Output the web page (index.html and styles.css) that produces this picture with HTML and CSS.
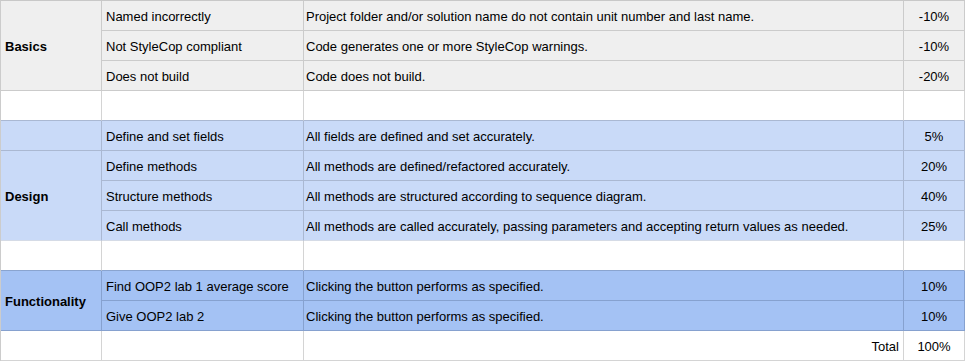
FILE: index.html
```html
<!DOCTYPE html>
<html>
<head>
<meta charset="utf-8">
<link rel="stylesheet" href="styles.css">
</head>
<body>
<div class="rubric">
  <div class="c cat gray b-gray span3">Basics</div>
  <div class="c gray b-gray">Named incorrectly</div>
  <div class="c desc gray b-gray">Project folder and/or solution name do not contain unit number and last name.</div>
  <div class="c pct gray b-gray">-10%</div>
  <div class="c gray b-gray">Not StyleCop compliant</div>
  <div class="c desc gray b-gray">Code generates one or more StyleCop warnings.</div>
  <div class="c pct gray b-gray">-10%</div>
  <div class="c gray b-gray">Does not build</div>
  <div class="c desc gray b-gray">Code does not build.</div>
  <div class="c pct gray b-gray">-20%</div>

  <div class="c blank to-design"></div>
  <div class="c blank to-design"></div>
  <div class="c blank to-design"></div>
  <div class="c blank to-design"></div>

  <div class="c design b-design"></div>
  <div class="c design b-design">Define and set fields</div>
  <div class="c desc design b-design">All fields are defined and set accurately.</div>
  <div class="c pct design b-design">5%</div>
  <div class="c cat design b-design span3 last-design">Design</div>
  <div class="c design b-design">Define methods</div>
  <div class="c desc design b-design">All methods are defined/refactored accurately.</div>
  <div class="c pct design b-design">20%</div>
  <div class="c design b-design">Structure methods</div>
  <div class="c desc design b-design">All methods are structured according to sequence diagram.</div>
  <div class="c pct design b-design">40%</div>
  <div class="c design b-design last-design">Call methods</div>
  <div class="c desc design b-design last-design">All methods are called accurately, passing parameters and accepting return values as needed.</div>
  <div class="c pct design b-design last-design">25%</div>

  <div class="c blank to-func"></div>
  <div class="c blank to-func"></div>
  <div class="c blank to-func"></div>
  <div class="c blank to-func"></div>

  <div class="c cat func b-func span2">Functionality</div>
  <div class="c func b-func">Find OOP2 lab 1 average score</div>
  <div class="c desc func b-func">Clicking the button performs as specified.</div>
  <div class="c pct func b-func">10%</div>
  <div class="c func b-func">Give OOP2 lab 2</div>
  <div class="c desc func b-func">Clicking the button performs as specified.</div>
  <div class="c pct func b-func">10%</div>

  <div class="c blank"></div>
  <div class="c blank"></div>
  <div class="c blank total">Total</div>
  <div class="c pct blank">100%</div>
</div>
</body>
</html>
```
FILE: styles.css
```css
html, body {
  margin: 0;
  padding: 0;
  background: #ffffff;
}

.rubric {
  display: grid;
  grid-template-columns: 101px 202px 600px 61px;
  grid-auto-rows: 30px;
  border-top: 1px solid #c8c8c8;
  border-left: 1px solid #cccccc;
  width: 965px;
  box-sizing: border-box;
  font-family: "Liberation Sans", Arial, sans-serif;
  font-size: 13px;
  color: #000000;
}

.c {
  box-sizing: border-box;
  display: flex;
  align-items: center;
  padding: 1px 3px 0 4px;
  border-right: 1px solid #d4d4d4;
  border-bottom: 1px solid #d4d4d4;
  white-space: nowrap;
  overflow: hidden;
}

.desc {
  padding-left: 2px;
}

.cat {
  font-weight: bold;
  padding-left: 4px;
}

.span3 { grid-row: span 3; }
.span2 { grid-row: span 2; }

.pct {
  justify-content: center;
  padding: 1px 0 0 0;
}

.total {
  justify-content: flex-end;
  padding-right: 4px;
}

.gray { background: #efefef; }
.b-gray { border-color: #cbcbcb; }

.blank { background: #ffffff; }
.to-design { border-bottom-color: #aab8d2; }
.to-func { border-bottom-color: #8aa4cf; }

.design { background: #c9daf8; }
.b-design { border-color: #aab8d2; }
.last-design { border-bottom-color: #d5dbe6; }

.func { background: #a4c2f4; }
.b-func { border-color: #86a1cf; }
```
